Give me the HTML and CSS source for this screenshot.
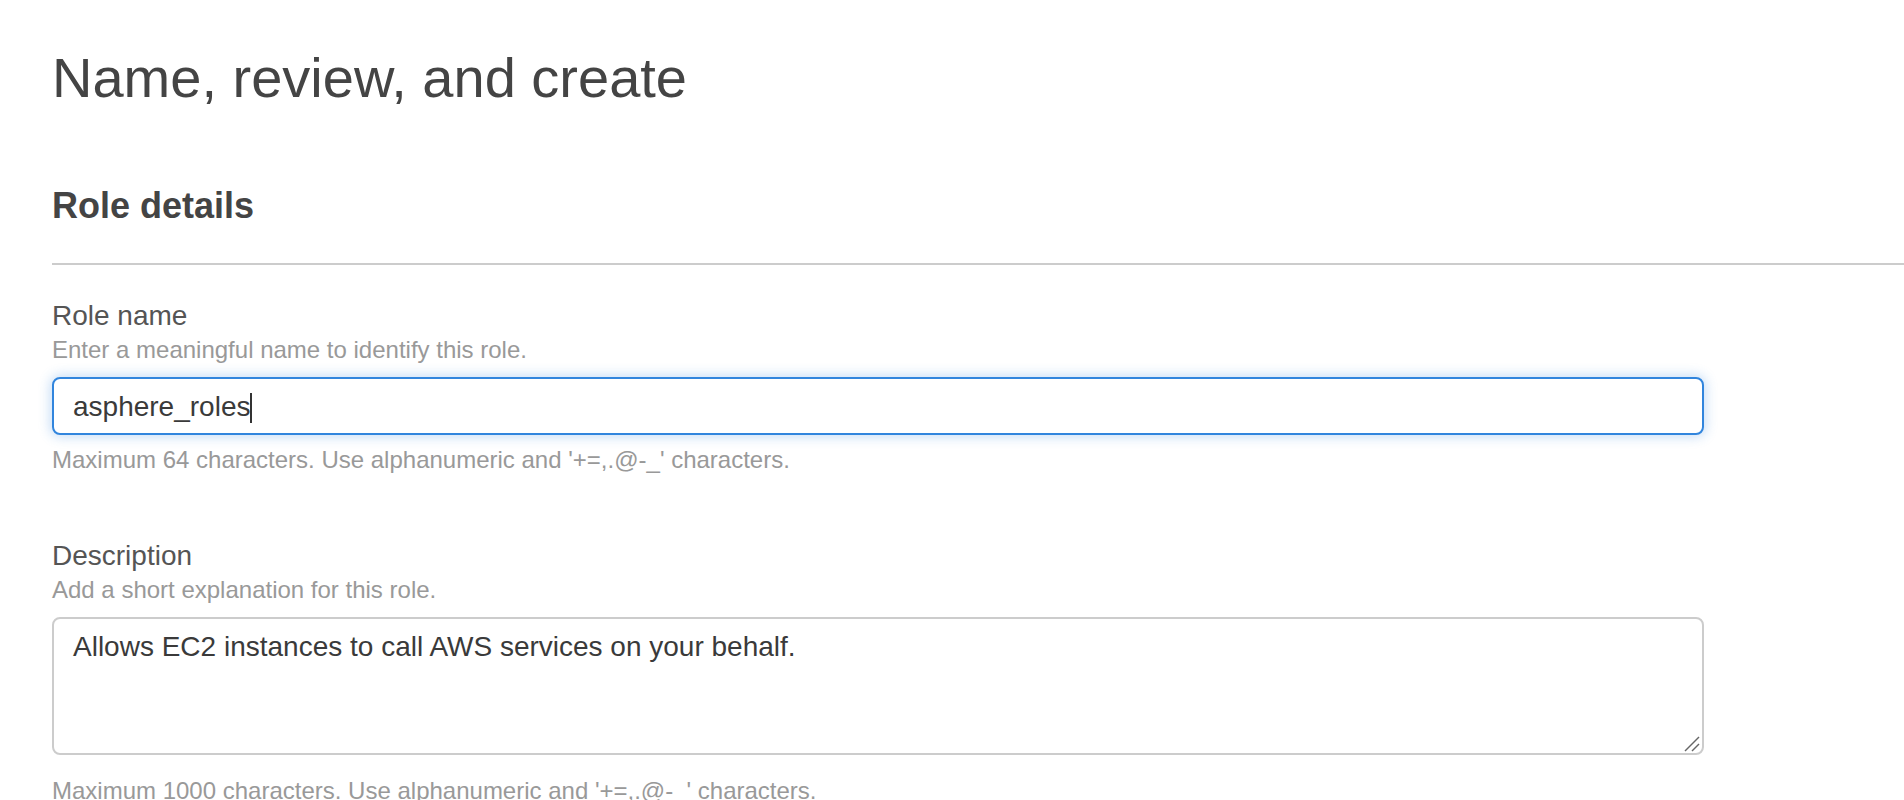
FILE: index.html
```html
<!DOCTYPE html>
<html lang="en">
<head>
<meta charset="utf-8">
<title>Name, review, and create</title>
<link rel="stylesheet" href="styles.css">
</head>
<body>
<main class="page">
  <h1 class="title">Name, review, and create</h1>
  <h2 class="section-title">Role details</h2>
  <hr class="divider">

  <div class="field">
    <div class="label">Role name</div>
    <div class="hint">Enter a meaningful name to identify this role.</div>
    <div class="input focused">asphere_roles<span class="caret"></span></div>
    <div class="constraint">Maximum 64 characters. Use alphanumeric and '+=,.@-_' characters.</div>
  </div>

  <div class="field field-desc">
    <div class="label">Description</div>
    <div class="hint">Add a short explanation for this role.</div>
    <div class="textarea">Allows EC2 instances to call AWS services on your behalf.
      <svg class="resizer" width="16" height="16" viewBox="0 0 16 16" aria-hidden="true">
        <line x1="1" y1="15" x2="15" y2="1" stroke="#666" stroke-width="1.4"/>
        <line x1="8" y1="15" x2="15" y2="8" stroke="#666" stroke-width="1.4"/>
      </svg>
    </div>
    <div class="constraint constraint-desc">Maximum 1000 characters. Use alphanumeric and '+=,.@-_' characters.</div>
  </div>
</main>
</body>
</html>
```

FILE: styles.css
```css
html, body {
  margin: 0;
  padding: 0;
  background: #ffffff;
}

body {
  font-family: "Liberation Sans", Arial, Helvetica, sans-serif;
  color: #444;
  overflow: hidden;
}

.page {
  padding: 46px 0 0 52px;
}

.title {
  margin: 0;
  font-size: 56px;
  line-height: 64px;
  font-weight: normal;
  color: #444;
}

.section-title {
  margin: 74px 0 0;
  font-size: 36px;
  line-height: 44px;
  font-weight: bold;
  color: #444;
}

.divider {
  margin: 35px 0 0;
  border: 0;
  height: 2px;
  background: #cccccc;
}

.field {
  margin-top: 35px;
  width: 1652px;
}

.field-desc {
  margin-top: 66px;
}

.label {
  font-size: 28px;
  line-height: 32px;
  color: #555;
}

.hint {
  margin-top: 4px;
  font-size: 24px;
  line-height: 28px;
  color: #999;
}

.input,
.textarea {
  position: relative;
  margin-top: 13px;
  box-sizing: border-box;
  border: 2px solid #cccccc;
  border-radius: 8px;
  padding: 3px 19px 1px;
  font-size: 28px;
  line-height: 50px;
  color: #3a3a3a;
  background: #fff;
}

.input {
  height: 58px;
}

.input.focused {
  border-color: #3185dd;
  box-shadow: 0 0 12px 2px rgba(49, 133, 221, 0.28);
}

.caret {
  display: inline-block;
  width: 2px;
  height: 30px;
  background: #333;
  vertical-align: -7px;
}

.textarea {
  height: 138px;
}

.resizer {
  position: absolute;
  right: 2px;
  bottom: 1px;
}

.constraint {
  margin-top: 11px;
  font-size: 24px;
  line-height: 28px;
  color: #999;
}

.constraint-desc {
  margin-top: 22px;
}
```
